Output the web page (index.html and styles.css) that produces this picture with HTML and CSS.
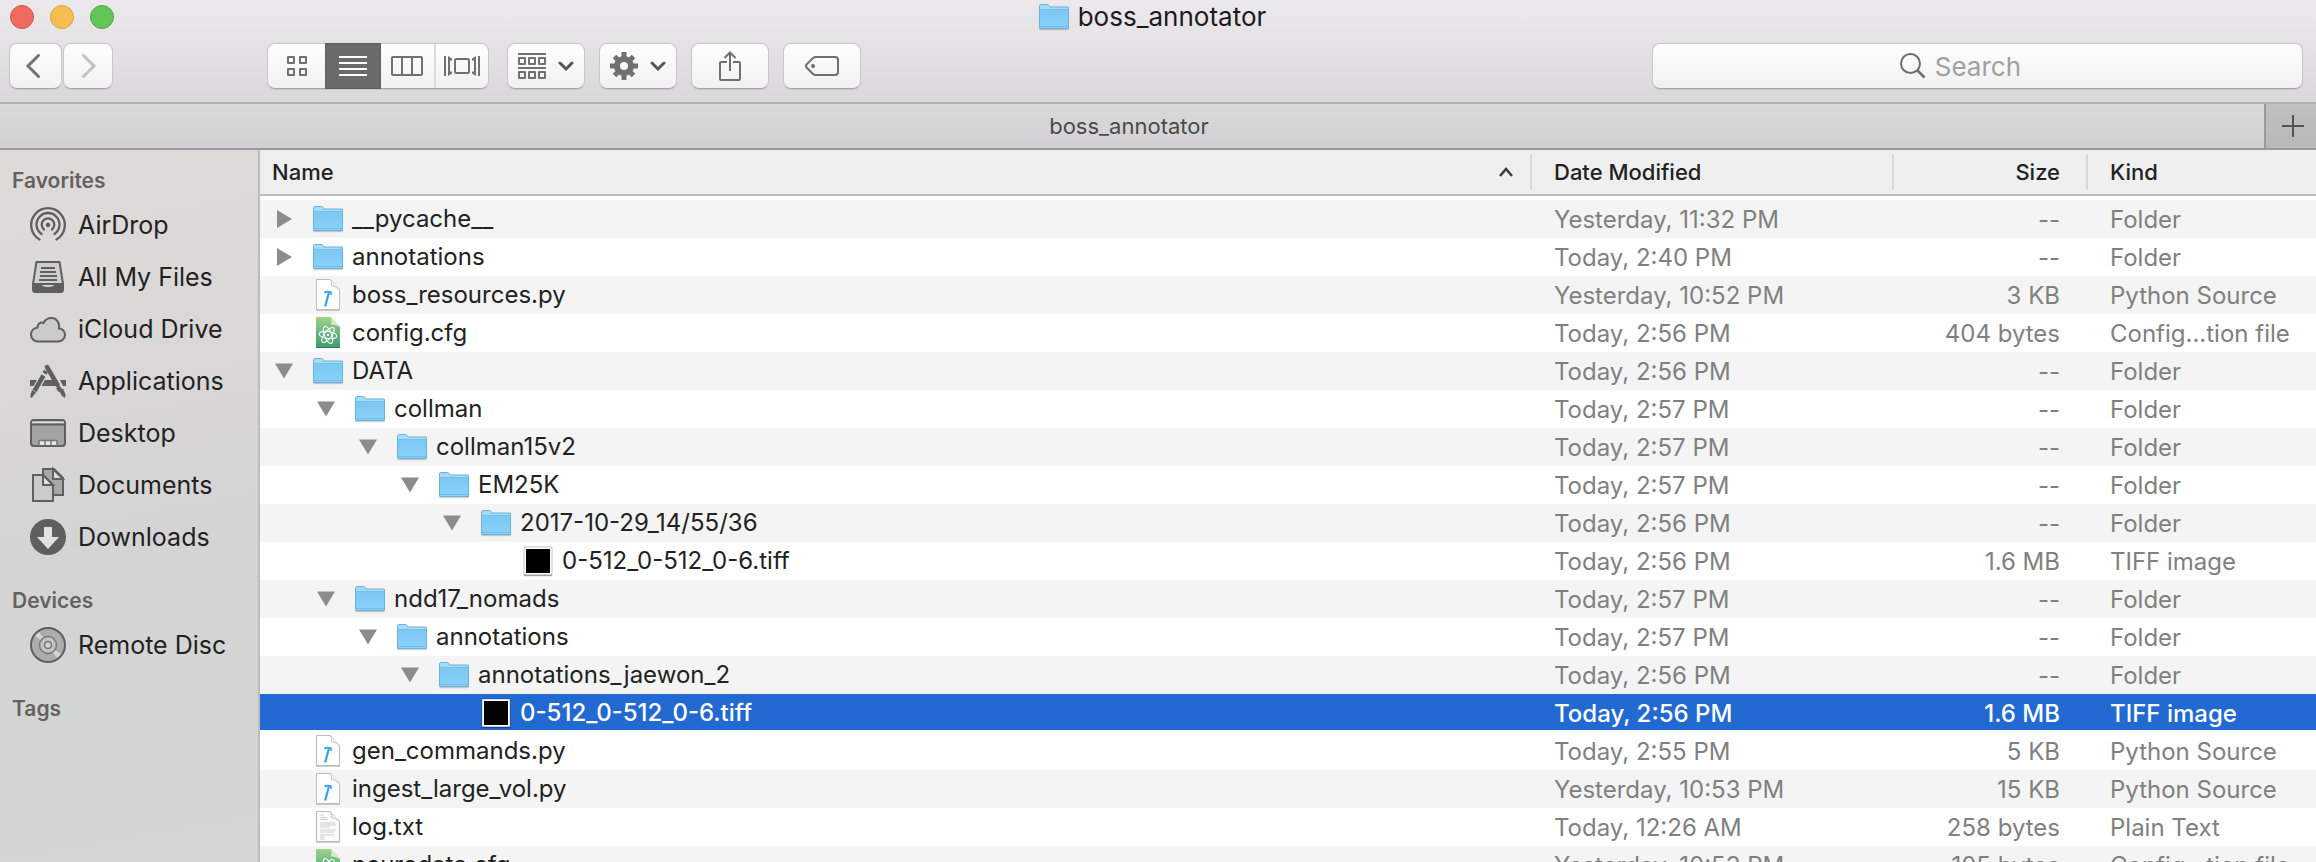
FILE: index.html
```html
<!DOCTYPE html>
<html lang="en">
<head>
<meta charset="utf-8">
<title>boss_annotator</title>
<link rel="stylesheet" href="styles.css">
</head>
<body>
<svg class="defs" aria-hidden="true">
  <defs>
    <linearGradient id="folder-fill" x1="0" y1="0" x2="0" y2="1"><stop offset="0" stop-color="#7cc8f3"/><stop offset="1" stop-color="#8ad2fa"/></linearGradient>
    <linearGradient id="atom-fill" x1="0" y1="0" x2="0" y2="1"><stop offset="0" stop-color="#a3d18a"/><stop offset=".5" stop-color="#66b780"/><stop offset="1" stop-color="#3f9b72"/></linearGradient>
    <symbol id="folder" viewBox="0 0 32 28">
      <path d="M1.500 26.500h29" stroke="#000" stroke-opacity=".18" stroke-width="1.500"/>
      <path d="M1.500 3q0-1.500 1.500-1.500h6.500q1 0 1.500 1l1 1.500h17.500q1 0 1 1V8h-29z" fill="#a3dcfb"/>
      <path d="M1 6.500h30V25q0 1-1 1H2q-1 0-1-1z" fill="url(#folder-fill)"/>
      <path d="M1 6.500h30M1 23.500h30" stroke="#6bb6e0" stroke-width="1" fill="none" opacity=".7"/>
      <path d="M1.500 25V3q0-1 1-1.500h7q1 0 1.500 1l1 1.500h18q.5 0 .5 1v20.500H2z" fill="none" stroke="#69b3db" stroke-width="1"/>
    </symbol>
    <symbol id="python" viewBox="0 0 32 34">
      <path d="M4.500 1.500h14l9 10v20h-23z" fill="#fff" stroke="#bcbcbc"/>
      <path d="M4 32.500h24" stroke="#999" stroke-opacity=".5"/>
      <path d="M18.500 1.500q1.500 3 1 6 3 0 8 4" fill="#f3f3f3" stroke="#c6c6c6"/>
      <path d="M12.500 14.500q3-1.500 7 .2" fill="none" stroke="#3ba1ea" stroke-width="2"/>
      <path d="M19 13.500v3.500" stroke="#3ba1ea" stroke-width="1.500"/>
      <path d="M16.800 15l-3.600 13.500" fill="none" stroke="#3ba1ea" stroke-width="2.200"/>
    </symbol>
    <symbol id="atom" viewBox="0 0 32 34">
      <path d="M4 1h15l9 10v21H4z" fill="url(#atom-fill)"/>
      <path d="M4 31.500h24" stroke="#2f7f5d"/>
      <path d="M18.500 1l9.500 10q-5-3-9-2.500 1-4-.5-7.500z" fill="#d5eac8"/>
      <g fill="none" stroke="#fff" stroke-width="1.100"><ellipse cx="16" cy="19" rx="9" ry="3.600" transform="rotate(8 16 19)"/><ellipse cx="16" cy="19" rx="9" ry="3.600" transform="rotate(68 16 19)"/><ellipse cx="16" cy="19" rx="9" ry="3.600" transform="rotate(128 16 19)"/></g>
      <circle cx="16" cy="19" r="1.200" fill="#fff"/>
    </symbol>
    <symbol id="text" viewBox="0 0 32 34">
      <path d="M4.500 1.500h14l9 10v20h-23z" fill="#fbfbfb" stroke="#bcbcbc"/>
      <path d="M4 32.500h24" stroke="#999" stroke-opacity=".5"/>
      <path d="M18.500 1.500q1.500 3 1 6 3 0 8 4" fill="#f3f3f3" stroke="#c6c6c6"/>
      <path d="M8 5h4M8 7.500h7M8 9.500h8M8 13h15M8 15h16M8 17h10M8 20h16M8 22h14M8 25h14M8 27h4M8 29h5" stroke="#cdcdcd"/>
    </symbol>
    <symbol id="tiff" viewBox="0 0 32 34">
      <path d="M2 3h28v28H2z" fill="#fff" stroke="#000" stroke-opacity=".24"/>
      <path d="M2 31.500h28" stroke="#000" stroke-opacity=".28" stroke-width="1.500"/>
      <path d="M4 5h24v24H4z" fill="#000"/>
    </symbol>
    <symbol id="open" viewBox="0 0 24 24"><path d="M3 4.500h18l-9 15z" fill="#8c8c8c"/></symbol>
    <symbol id="closed" viewBox="0 0 24 24"><path d="M5 3v18l15-9z" fill="#8c8c8c"/></symbol>
    <symbol id="down" viewBox="0 0 16 12"><path d="M2 3l6 6 6-6" fill="none" stroke="#555" stroke-width="3" stroke-linecap="round" stroke-linejoin="miter"/></symbol>
  </defs>
</svg>

<div class="window">
  <header class="titlebar">
    <div class="title-row">
      <div class="lights">
        <button class="light close" aria-label="Close"></button>
        <button class="light minimize" aria-label="Minimize"></button>
        <button class="light zoom" aria-label="Zoom"></button>
      </div>
      <h1 class="title"><svg class="icon-folder" aria-hidden="true"><use href="#folder"/></svg>boss_annotator</h1>
    </div>
    <div class="toolbar">
      <div class="nav">
        <button class="btn back" aria-label="Back"><svg width="16" height="26" viewBox="0 0 16 26"><path d="M13.500 2.500L3 13l10.500 10.500" fill="none" stroke="#737373" stroke-width="3" stroke-linecap="round"/></svg></button>
        <button class="btn forward" aria-label="Forward" disabled><svg width="16" height="26" viewBox="0 0 16 26"><path d="M2.500 2.500L13 13 2.500 23.500" fill="none" stroke="#c3c3c3" stroke-width="3" stroke-linecap="round"/></svg></button>
      </div>
      <div class="btn views" role="group" aria-label="View">
        <button class="seg" aria-label="Icons"><svg width="20" height="20" viewBox="0 0 20 20"><path d="M1 1h6v6H1zM13 1h6v6h-6zM1 13h6v6H1zM13 13h6v6h-6z" fill="none" stroke="#707070" stroke-width="2" stroke-linejoin="round"/></svg></button>
        <button class="seg selected" aria-label="List" aria-pressed="true"><svg width="28" height="20" viewBox="0 0 28 20"><path d="M0 1h28M0 7h28M0 13h28M0 19h28" stroke="#fff" stroke-width="2"/></svg></button>
        <button class="seg" aria-label="Columns"><svg width="32" height="20" viewBox="0 0 32 20"><path d="M2 1h28q1 0 1 1v16q0 1-1 1H2q-1 0-1-1V2q0-1 1-1zM11 1v18M21 1v18" fill="none" stroke="#707070" stroke-width="2"/></svg></button>
        <button class="seg" aria-label="Cover Flow"><svg width="36" height="20" viewBox="0 0 36 20"><path d="M1 0v20M35 0v20" stroke="#707070" stroke-width="2"/><path d="M4 0l4 2.500v2H6v11h2v2L4 20zM32 0l-4 2.500v2h2v11h-2v2l4 2.500z" fill="#707070"/><rect x="11" y="3" width="14" height="14" rx="1.500" fill="none" stroke="#707070" stroke-width="2"/></svg></button>
      </div>
      <button class="btn tool" aria-label="Arrange"><svg width="28" height="26" viewBox="0 0 28 26"><path d="M0 1h28M0 15h28" stroke="#707070" stroke-width="2"/><path d="M1 5h6v6H1zM11 5h6v6h-6zM21 5h6v6h-6zM1 19h6v6H1zM11 19h6v6h-6zM21 19h6v6h-6z" fill="none" stroke="#707070" stroke-width="2" stroke-linejoin="round"/></svg><svg class="chev"><use href="#down"/></svg></button>
      <button class="btn tool" aria-label="Action"><svg width="28" height="28" viewBox="0 0 28 28"><circle cx="14" cy="14" r="7" fill="none" stroke="#707070" stroke-width="6"/><g stroke="#707070" stroke-width="5"><path d="M14 0v6M14 22v6M0 14h6M22 14h6"/><path d="M4.500 4.500l4 4M19.500 19.500l4 4M23.500 4.500l-4 4M4.500 23.500l4-4"/></g></svg><svg class="chev"><use href="#down"/></svg></button>
      <button class="btn tool" aria-label="Share"><svg width="22" height="30" viewBox="0 0 22 30"><path d="M8 11H2q-1 0-1 1v16q0 1 1 1h18q1 0 1-1V12q0-1-1-1h-6M11 20V2M5.500 7L11 1.500 16.500 7" fill="none" stroke="#707070" stroke-width="2"/></svg></button>
      <button class="btn tool" aria-label="Tags"><svg width="34" height="20" viewBox="0 0 34 20"><path d="M11 1h19q3 0 3 3v12q0 3-3 3H11q-2 0-3-1l-6-6q-2-2 0-4l6-6q1-1 3-1z" fill="none" stroke="#707070" stroke-width="2"/><circle cx="8" cy="10" r="2" fill="#707070"/></svg></button>
      <label class="btn search"><svg width="26" height="26" viewBox="0 0 26 26"><circle cx="10.500" cy="10.500" r="9.500" fill="none" stroke="#6e6e6e" stroke-width="2"/><path d="M17.500 17.500l7 7" stroke="#6e6e6e" stroke-width="2.500"/></svg><input type="search" placeholder="Search" aria-label="Search"></label>
    </div>
  </header>

  <nav class="tabs" aria-label="Tabs">
    <button class="tab">boss_annotator</button>
    <button class="new-tab" aria-label="New tab"><svg width="22" height="22" viewBox="0 0 22 22"><path d="M11 0v22M0 11h22" stroke="#555" stroke-width="2"/></svg></button>
  </nav>

  <div class="content">
    <aside class="sidebar">
      <section>
        <h2>Favorites</h2>
        <a href="#airdrop"><svg viewBox="0 0 36 36"><g fill="none" stroke="#5f5f5f" stroke-width="2.300" stroke-linecap="round"><path d="M9.500 32.500a16.800 16.800 0 1 1 17 0"/><path d="M11.500 27a11.500 11.500 0 1 1 13 0"/><path d="M14 22.500a6.300 6.300 0 1 1 8 0"/></g><circle cx="18" cy="18" r="2.300" fill="#5f5f5f"/></svg>AirDrop</a>
        <a href="#all"><svg viewBox="0 0 36 36"><path d="M6.500 3h23l3.500 22H3z" fill="#d0d0d0" stroke="#5f5f5f" stroke-width="2" stroke-linejoin="round"/><path d="M11 9h14M10 13h16M10 17h17M9 21h18" stroke="#5f5f5f" stroke-width="2"/><path d="M2 24h8q2 4 8 4t8-4h8v6q0 4-3 4H5q-3 0-3-4z" fill="#5f5f5f"/></svg>All My Files</a>
        <a href="#icloud"><svg viewBox="0 0 36 36"><path d="M8 30.500h20c4 0 7-3 7-6.500 0-4-3-6.500-6-6.500C30 11 26 7 21.500 7c-4 0-6.500 2-8 5-3-1.500-6 .5-6 4.500-4 .5-6.500 3.500-6.500 7 0 4 3 7 7 7z" fill="#cbcbcb" stroke="#5f5f5f" stroke-width="2"/></svg>iCloud Drive</a>
        <a href="#applications"><svg viewBox="0 0 36 36"><path d="M0 17h7l-3.500 6H0zM15 17h8l3 6H11.500zM30 17h6v6h-3z" fill="#5f5f5f"/><g stroke="#5f5f5f" stroke-width="4.500" fill="none"><path d="M17 4l10.500 18" stroke-linecap="round"/><path d="M28 24l2.500 4"/><path d="M16 8l-1.500 2.500M13.500 12.500L4.500 28"/></g><path d="M2 27l4 2.500-4 5L.5 35V32zM29 27.500l4-2 2.500 6-.5 3.500-3-2z" fill="#5f5f5f"/></svg>Applications</a>
        <a href="#desktop"><svg viewBox="0 0 36 36"><rect x="1" y="5" width="34" height="26" rx="3" fill="#a3a3a3" stroke="#5f5f5f" stroke-width="2"/><path d="M2 6.500h32v2H2z" fill="#dcdcdc"/><path d="M1 9.500h34" stroke="#5f5f5f" stroke-width="2"/><path d="M9 25.500h18V30H9z" fill="#e6e6e6"/><path d="M9 31v-5.500h18V31M15 25v6M21 25v6" fill="none" stroke="#777" stroke-width="1.500"/></svg>Desktop</a>
        <a href="#documents"><svg viewBox="0 0 36 36"><path d="M13 2h11l9 9v17H13z" fill="#a8a8a8" stroke="#5f5f5f" stroke-width="2"/><path d="M23 2v10h10z" fill="#dedede" stroke="#5f5f5f" stroke-width="2"/><path d="M3 8h10l10 10v16H3z" fill="#cbcbcb" stroke="#5f5f5f" stroke-width="2"/><path d="M13 8v10h10z" fill="#e0e0e0" stroke="#5f5f5f" stroke-width="2"/></svg>Documents</a>
        <a href="#downloads"><svg viewBox="0 0 36 36"><circle cx="18" cy="18" r="18" fill="#5f5f5f"/><path d="M14 8h8v10h7L18 30 7 18h7z" fill="#e2e2e2"/></svg>Downloads</a>
      </section>
      <section>
        <h2>Devices</h2>
        <a href="#disc"><svg viewBox="0 0 36 36"><circle cx="18" cy="18" r="17" fill="#acacac" stroke="#5f5f5f" stroke-width="2"/><path d="M18 18L5 9l4-4zM18 18l13 9-4 4z" fill="#d6d6d6"/><circle cx="18" cy="18" r="8.500" fill="#c3c3c3" stroke="#777" stroke-width="1.500"/><circle cx="18" cy="18" r="3.500" fill="#d3d3d3" stroke="#777" stroke-width="1.500"/></svg>Remote Disc</a>
      </section>
      <section>
        <h2>Tags</h2>
      </section>
    </aside>

    <main class="files">
      <table>
        <colgroup><col><col class="col-date"><col class="col-size"><col class="col-kind"></colgroup>
        <thead>
          <tr>
            <th aria-sort="ascending"><span class="head name-head">Name<svg width="16" height="12" viewBox="0 0 16 12"><path d="M2 10l6-7 6 7" fill="none" stroke="#3c3c3c" stroke-width="2.500"/></svg></span></th>
            <th><span class="head">Date Modified</span></th>
            <th class="size"><span class="head">Size</span></th>
            <th><span class="head">Kind</span></th>
          </tr>
        </thead>
        <tbody>
          <tr class="alt"><td><div class="name"><button class="tri" aria-label="Expand"><svg><use href="#closed"/></svg></button><svg class="icon-folder"><use href="#folder"/></svg>__pycache__</div></td><td>Yesterday, 11:32 PM</td><td class="size">--</td><td>Folder</td></tr>
          <tr><td><div class="name"><button class="tri" aria-label="Expand"><svg><use href="#closed"/></svg></button><svg class="icon-folder"><use href="#folder"/></svg>annotations</div></td><td>Today, 2:40 PM</td><td class="size">--</td><td>Folder</td></tr>
          <tr class="alt"><td><div class="name"><span class="tri"></span><svg class="icon-file"><use href="#python"/></svg>boss_resources.py</div></td><td>Yesterday, 10:52 PM</td><td class="size">3 KB</td><td>Python Source</td></tr>
          <tr><td><div class="name"><span class="tri"></span><svg class="icon-file"><use href="#atom"/></svg>config.cfg</div></td><td>Today, 2:56 PM</td><td class="size">404 bytes</td><td>Config...tion file</td></tr>
          <tr class="alt"><td><div class="name"><button class="tri" aria-label="Collapse"><svg><use href="#open"/></svg></button><svg class="icon-folder"><use href="#folder"/></svg>DATA</div></td><td>Today, 2:56 PM</td><td class="size">--</td><td>Folder</td></tr>
          <tr><td><div class="name l1"><button class="tri" aria-label="Collapse"><svg><use href="#open"/></svg></button><svg class="icon-folder"><use href="#folder"/></svg>collman</div></td><td>Today, 2:57 PM</td><td class="size">--</td><td>Folder</td></tr>
          <tr class="alt"><td><div class="name l2"><button class="tri" aria-label="Collapse"><svg><use href="#open"/></svg></button><svg class="icon-folder"><use href="#folder"/></svg>collman15v2</div></td><td>Today, 2:57 PM</td><td class="size">--</td><td>Folder</td></tr>
          <tr><td><div class="name l3"><button class="tri" aria-label="Collapse"><svg><use href="#open"/></svg></button><svg class="icon-folder"><use href="#folder"/></svg>EM25K</div></td><td>Today, 2:57 PM</td><td class="size">--</td><td>Folder</td></tr>
          <tr class="alt"><td><div class="name l4"><button class="tri" aria-label="Collapse"><svg><use href="#open"/></svg></button><svg class="icon-folder"><use href="#folder"/></svg>2017-10-29_14/55/36</div></td><td>Today, 2:56 PM</td><td class="size">--</td><td>Folder</td></tr>
          <tr><td><div class="name l5"><span class="tri"></span><svg class="icon-file"><use href="#tiff"/></svg>0-512_0-512_0-6.tiff</div></td><td>Today, 2:56 PM</td><td class="size">1.6 MB</td><td>TIFF image</td></tr>
          <tr class="alt"><td><div class="name l1"><button class="tri" aria-label="Collapse"><svg><use href="#open"/></svg></button><svg class="icon-folder"><use href="#folder"/></svg>ndd17_nomads</div></td><td>Today, 2:57 PM</td><td class="size">--</td><td>Folder</td></tr>
          <tr><td><div class="name l2"><button class="tri" aria-label="Collapse"><svg><use href="#open"/></svg></button><svg class="icon-folder"><use href="#folder"/></svg>annotations</div></td><td>Today, 2:57 PM</td><td class="size">--</td><td>Folder</td></tr>
          <tr class="alt"><td><div class="name l3"><button class="tri" aria-label="Collapse"><svg><use href="#open"/></svg></button><svg class="icon-folder"><use href="#folder"/></svg>annotations_jaewon_2</div></td><td>Today, 2:56 PM</td><td class="size">--</td><td>Folder</td></tr>
          <tr class="current" aria-selected="true"><td><div class="name l4"><span class="tri"></span><svg class="icon-file"><use href="#tiff"/></svg>0-512_0-512_0-6.tiff</div></td><td>Today, 2:56 PM</td><td class="size">1.6 MB</td><td>TIFF image</td></tr>
          <tr><td><div class="name"><span class="tri"></span><svg class="icon-file"><use href="#python"/></svg>gen_commands.py</div></td><td>Today, 2:55 PM</td><td class="size">5 KB</td><td>Python Source</td></tr>
          <tr class="alt"><td><div class="name"><span class="tri"></span><svg class="icon-file"><use href="#python"/></svg>ingest_large_vol.py</div></td><td>Yesterday, 10:53 PM</td><td class="size">15 KB</td><td>Python Source</td></tr>
          <tr><td><div class="name"><span class="tri"></span><svg class="icon-file"><use href="#text"/></svg>log.txt</div></td><td>Today, 12:26 AM</td><td class="size">258 bytes</td><td>Plain Text</td></tr>
          <tr class="alt"><td><div class="name"><span class="tri"></span><svg class="icon-file"><use href="#atom"/></svg>neurodata.cfg</div></td><td>Yesterday, 10:53 PM</td><td class="size">105 bytes</td><td>Config...tion file</td></tr>
        </tbody>
      </table>
    </main>
  </div>
</div>
</body>
</html>
```
FILE: styles.css
```css
* { box-sizing: border-box; }
body { margin: 0; font-family: Inter, "Liberation Sans", sans-serif; font-size: 24px; color: #222; }
button { font: inherit; color: inherit; border: 0; padding: 0; background: none; }
svg { display: block; flex: none; }
h1, h2 { margin: 0; }
.defs { position: absolute; width: 0; height: 0; }

.window { display: flex; flex-direction: column; height: 100vh; overflow: hidden; }

.titlebar { background: linear-gradient(#ebe9ec, #e3e1e4 50%, #d9d7da); border-bottom: 2px solid #b2b0b2; padding-bottom: 13px; }
.title-row { display: grid; grid-template-columns: 1fr auto 1fr; align-items: center; height: 43px; padding: 0 22px 10px 10px; }
.lights { display: flex; gap: 16px; }
.light { width: 24px; height: 24px; border-radius: 50%; border: 1px solid; }
.close { background: #ee6a5f; border-color: #d9534b; }
.minimize { background: #f6be50; border-color: #dca23c; }
.zoom { background: #61c655; border-color: #4cab3e; }
.title { display: flex; align-items: center; gap: 8px; font-size: 26px; line-height: 32px; font-weight: 400; color: #1c1a1c; }
.icon-folder { width: 32px; height: 28px; }

.toolbar { display: flex; padding: 0 13px 0 9px; gap: 14px; }
.btn { display: flex; align-items: center; justify-content: center; height: 46px; border: 1px solid #c9c7ca; border-bottom-color: #a9a7aa; border-radius: 8px; background: linear-gradient(#fefefe, #f1f1f1); box-shadow: 0 1px 0 rgba(0, 0, 0, .08); }
.nav { display: flex; gap: 1px; margin-right: 140px; }
.back { width: 53px; padding-right: 6px; }
.forward { width: 50px; padding-left: 2px; }
.views { width: 222px; margin-right: 4px; }
.seg { flex: 1; height: 44px; display: flex; align-items: center; justify-content: center; }
.seg:first-child { flex: 0 0 57px; }
.seg + .seg { border-left: 2px solid #dcdcdc; }
.seg.selected { flex: 0 0 56px; align-self: stretch; height: auto; margin: -1px 0; background: #6b6b6b; border: 1px solid #5e5e5e; }
.selected + .seg { border-left: 0; }
.tool { width: 78px; gap: 12px; }
.chev { width: 16px; height: 12px; }
.search { width: 28.4%; margin-left: auto; gap: 9px; }
.search input { width: 120px; border: 0; padding: 0; background: none; outline: 0; font: inherit; font-size: 26px; }
.search input::placeholder { color: #a0a0a0; opacity: 1; }

.tabs { display: flex; height: 46px; flex: none; background: linear-gradient(#d9d9d9, #d3d1d3); border-bottom: 2px solid #9b999b; }
.tab { flex: 1; padding-right: 6px; font-size: 22px; color: #4a4a4a; }
.new-tab { width: 52px; padding-left: 4px; display: flex; align-items: center; justify-content: center; background: linear-gradient(#c0c0c0, #b9b8b9); border-left: 2px solid #9b999b; }

.content { display: flex; flex: 1; min-height: 0; }
.sidebar { flex: none; width: 260px; padding-top: 13px; border-right: 2px solid #bdbbbc; background: linear-gradient(170deg, #dfdbd9, #d8d6d7 35%, #d4d4d4 60%, #d3d6d5); }
.sidebar section { margin-bottom: 20px; }
.sidebar h2 { padding-left: 12px; font-size: 21px; line-height: 36px; font-weight: 600; color: #646261; }
.sidebar a { display: flex; align-items: center; gap: 12px; height: 52px; padding-left: 30px; font-size: 25px; color: #222; text-decoration: none; white-space: nowrap; }
.sidebar a svg { width: 36px; height: 36px; }

.files { flex: 1; min-width: 0; overflow: hidden; background: #fff; }
table { width: 100%; table-layout: fixed; border-collapse: separate; border-spacing: 0; }
.col-date { width: 362px; }
.col-size { width: 194px; }
.col-kind { width: 230px; }
th { height: 46px; padding: 0; background: #efefef; border-bottom: 2px solid #bebebe; font-size: 22px; font-weight: 500; text-align: left; }
.head { display: block; height: 36px; line-height: 36px; padding: 0 26px 0 22px; border-left: 2px solid #d8d8d8; }
.name-head { display: flex; align-items: center; justify-content: space-between; padding: 0 16px 0 12px; border: 0; }
tbody::before { content: ""; display: table-row; height: 4px; }
td { height: 38px; padding: 1px 0 0 24px; white-space: nowrap; color: #808080; }
td:first-child { padding: 0; color: #222; }
.size { text-align: right; }
td.size { padding: 1px 26px 0 0; }
.alt { background: #f4f4f4; }
.current td { background: linear-gradient(#2369d2 36px, #fff 36px); }
.current td, .current td:first-child { color: #fff; font-weight: 500; }
.name { display: flex; align-items: center; height: 38px; padding-left: 12px; line-height: 36px; }
.l1 { padding-left: 54px; }
.l2 { padding-left: 96px; }
.l3 { padding-left: 138px; }
.l4 { padding-left: 180px; }
.l5 { padding-left: 222px; }
.tri { width: 24px; height: 24px; margin-right: 16px; }
.tri svg { width: 24px; height: 24px; }
.name .icon-folder, .icon-file { margin-right: 8px; }
.icon-file { width: 32px; height: 34px; }
```
